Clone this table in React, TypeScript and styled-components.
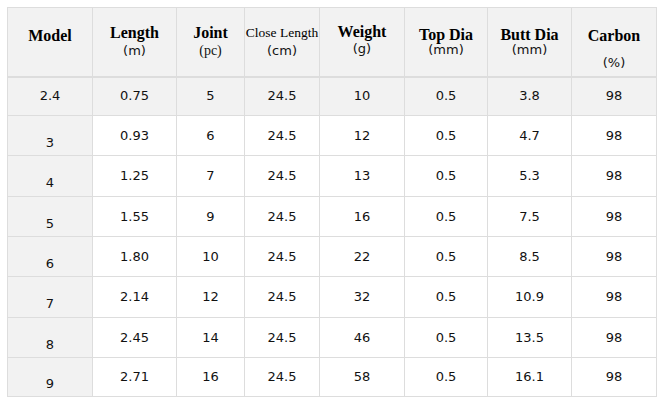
import React from "react";
import styled, { createGlobalStyle } from "styled-components";

const Global = createGlobalStyle`
  html, body { margin: 0; padding: 0; background: #fff; }
  body { padding: 7px; }
`;

const Table = styled.table`
  border-collapse: collapse;
  table-layout: fixed;
  width: 649px;
  border: 1px solid #dddddd;
  font-family: "DejaVu Sans", Verdana, sans-serif;
  font-size: 13px;
  color: #111;
`;

const Th = styled.th<{ $pt: number }>`
  height: 69px;
  padding: ${(p) => p.$pt}px 0 0 0;
  vertical-align: top;
  background: #f2f2f2;
  border: 1px solid #dddddd;
  border-bottom: 2px solid #dddddd;
  text-align: center;
  font-weight: normal;
  box-sizing: border-box;
`;

const Title = styled.span<{ $size?: number; $bold?: boolean }>`
  display: block;
  font-family: "Liberation Serif", "Times New Roman", serif;
  font-size: ${(p) => p.$size ?? 16}px;
  font-weight: ${(p) => (p.$bold === false ? 400 : 700)};
  line-height: 17px;
  color: #000;
  white-space: nowrap;
`;

const Unit = styled.span<{ $serif?: boolean; $gap?: number; $lh?: number }>`
  display: block;
  margin-top: ${(p) => p.$gap ?? 1}px;
  font-family: ${(p) =>
    p.$serif ? `"Liberation Serif", "Times New Roman", serif` : `"DejaVu Sans", Verdana, sans-serif`};
  font-size: ${(p) => (p.$serif ? 14 : 13)}px;
  line-height: ${(p) => p.$lh ?? 17}px;
  color: #111;
`;

const Tr = styled.tr<{ $shade?: boolean; $h: number }>`
  height: ${(p) => p.$h}px;
  background: ${(p) => (p.$shade ? "#f2f2f2" : "#ffffff")};
`;

const Td = styled.td<{ $first?: boolean; $drop?: boolean }>`
  padding: ${(p) => (p.$drop ? "14px 0 0 0" : "0")};
  box-sizing: border-box;
  text-align: center;
  vertical-align: middle;
  border: 1px solid #dddddd;
  background: ${(p) => (p.$first ? "#f2f2f2" : "transparent")};
  line-height: 16px;
`;

const widths = [85, 84, 68, 75, 85, 83, 84, 85];
const heights = [39, 40, 41, 40, 40, 41, 40, 39];

const rows = [
  ["2.4", "0.75", "5", "24.5", "10", "0.5", "3.8", "98"],
  ["3", "0.93", "6", "24.5", "12", "0.5", "4.7", "98"],
  ["4", "1.25", "7", "24.5", "13", "0.5", "5.3", "98"],
  ["5", "1.55", "9", "24.5", "16", "0.5", "7.5", "98"],
  ["6", "1.80", "10", "24.5", "22", "0.5", "8.5", "98"],
  ["7", "2.14", "12", "24.5", "32", "0.5", "10.9", "98"],
  ["8", "2.45", "14", "24.5", "46", "0.5", "13.5", "98"],
  ["9", "2.71", "16", "24.5", "58", "0.5", "16.1", "98"],
];

export default function App() {
  return (
    <>
      <Global />
      <Table>
        <colgroup>
          {widths.map((w, i) => (
            <col key={i} style={{ width: w }} />
          ))}
        </colgroup>
        <thead>
          <tr>
            <Th $pt={19}>
              <Title>Model</Title>
            </Th>
            <Th $pt={16}>
              <Title>Length</Title>
              <Unit>(m)</Unit>
            </Th>
            <Th $pt={16}>
              <Title>Joint</Title>
              <Unit $serif>(pc)</Unit>
            </Th>
            <Th $pt={16}>
              <Title $size={13.5} $bold={false}>Close Length</Title>
              <Unit>(cm)</Unit>
            </Th>
            <Th $pt={15}>
              <Title>Weight</Title>
              <Unit $gap={0}>(g)</Unit>
            </Th>
            <Th $pt={18}>
              <Title>Top Dia</Title>
              <Unit $gap={0} $lh={14}>(mm)</Unit>
            </Th>
            <Th $pt={18}>
              <Title>Butt Dia</Title>
              <Unit $gap={0} $lh={14}>(mm)</Unit>
            </Th>
            <Th $pt={19}>
              <Title>Carbon</Title>
              <Unit $gap={10}>(%)</Unit>
            </Th>
          </tr>
        </thead>
        <tbody>
          {rows.map((r, ri) => (
            <Tr key={ri} $shade={ri === 0} $h={heights[ri]}>
              {r.map((c, ci) => (
                <Td key={ci} $first={ci === 0} $drop={ci === 0 && ri > 0}>
                  {c}
                </Td>
              ))}
            </Tr>
          ))}
        </tbody>
      </Table>
    </>
  );
}
